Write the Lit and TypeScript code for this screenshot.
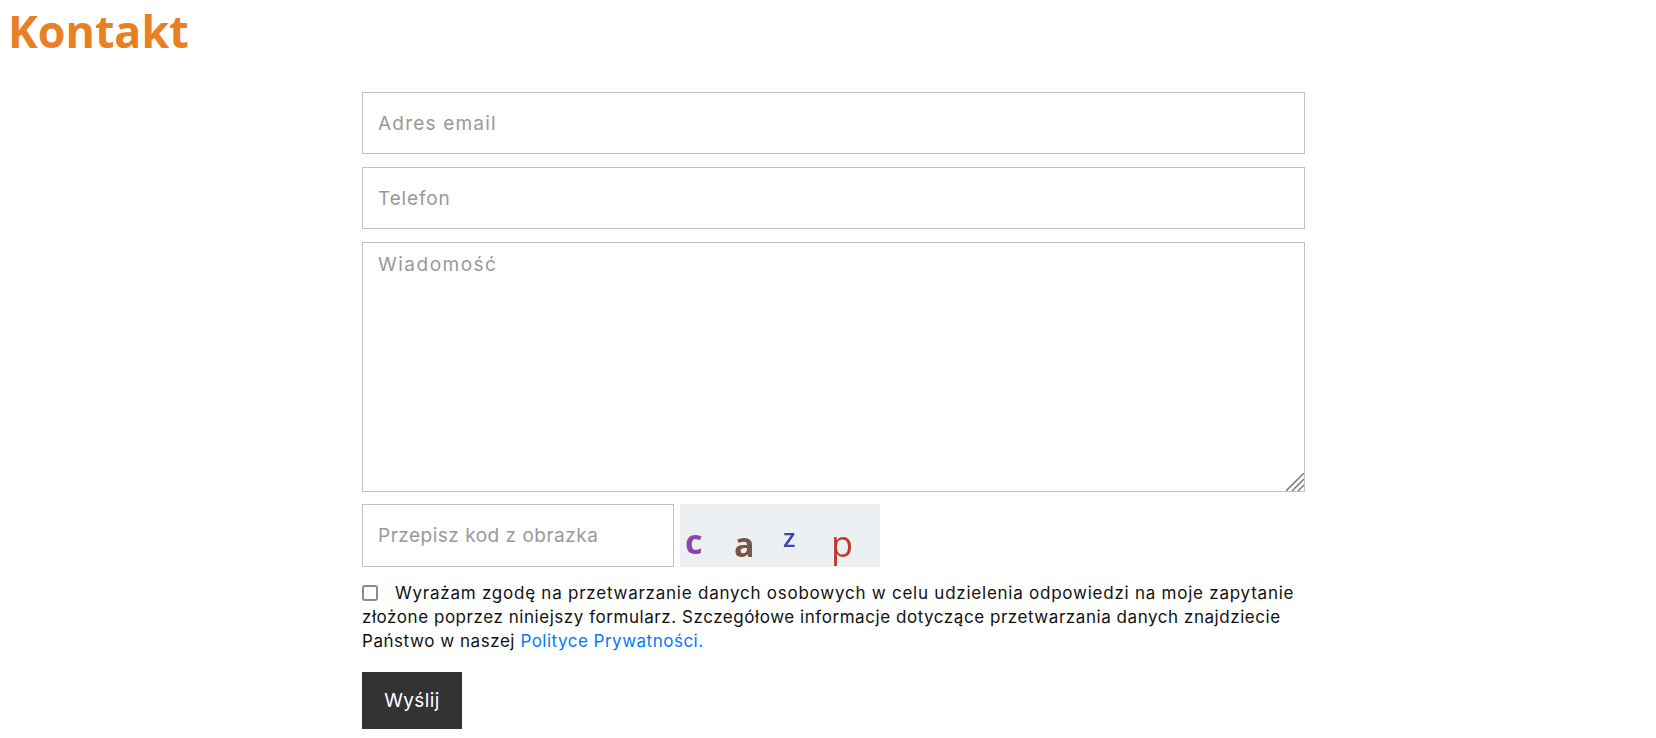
import { LitElement, html, css } from "lit";
import { customElement } from "lit/decorators.js";

@customElement("app-root")
export class AppRoot extends LitElement {
  static styles = css`
    :host { display: block; font-family: Inter, "Noto Sans", sans-serif; font-size: 17px; line-height: 24px; color: #212529; background: #fff; height: 738px; overflow: hidden; }
    * { box-sizing: border-box; }
    h1 { margin: 0; padding: 5px 0 0 8px; height: 92px; font: 700 44.8px/52px "Open Sans", sans-serif; color: #e98024; }
    form { width: 943px; margin-left: 362px; display: flex; flex-direction: column; gap: 13px; }
    input[type="text"], textarea { display: block; width: 100%; height: 62px; border: 1px solid #c2c2c2; border-radius: 0; padding: 0 15px; font: inherit; font-size: 19px; background: #fff; color: #212529; outline: none; margin: 0; }
    input::placeholder, textarea::placeholder { color: #999; opacity: 1; }
    .ls-email { letter-spacing: 1.2px; }
    .ls-phone { letter-spacing: 0.85px; }
    .ls-code { letter-spacing: 0.5px; }
    .area { position: relative; display: block; height: 250px; }
    textarea { height: 100%; padding-top: 10px; resize: none; letter-spacing: 1.5px; }
    .grip { position: absolute; right: 1px; bottom: 1px; width: 18px; height: 18px; pointer-events: none; }
    .captcha { display: flex; gap: 6px; height: 63px; margin-top: -1px; }
    .captcha input[type="text"] { width: 312px; height: 63px; }
    .img { width: 200px; height: 63px; background: #ecf0f3; display: block; filter: blur(0.4px); }
    .img text { font-family: "Open Sans", sans-serif; }
    .consent { margin: 1px 0 0; letter-spacing: 0.55px; color: #111; }
    .first { letter-spacing: 0.76px; }
    .consent input { appearance: none; width: 16px; height: 16px; margin: 0 17px 0 0; vertical-align: -2px; border: 2px solid #8a8a95; border-radius: 3px; background: #fff; }
    a { color: #007bff; text-decoration: none; letter-spacing: 0.5px; }
    button { align-self: flex-start; margin-top: 6px; width: 100px; height: 57px; border: 0; background: #333; color: #fff; font: inherit; font-size: 19px; letter-spacing: 0.4px; padding: 0; }
  `;
  render() {
    return html`
      <h1>Kontakt</h1>
      <form @submit=${(e: Event) => e.preventDefault()}>
        <input class="ls-email" type="text" placeholder="Adres email" />
        <input class="ls-phone" type="text" placeholder="Telefon" />
        <div class="area">
          <textarea placeholder="Wiadomość"></textarea>
          <svg class="grip" viewBox="0 0 18 18" aria-hidden="true">
            <path d="M0 18L18 0M6 18L18 6M12 18L18 12" stroke="#6f6f6f" stroke-width="1.4" fill="none" />
          </svg>
        </div>
        <div class="captcha">
          <input class="ls-code" type="text" placeholder="Przepisz kod z obrazka" />
          <svg class="img" viewBox="0 0 200 63" role="img" aria-label="captcha">
            <text x="5" y="50" font-size="34" font-weight="700" fill="#8e44ad">c</text>
            <text x="54" y="53" font-size="34" font-weight="700" fill="#795548">a</text>
            <text x="103" y="43" font-size="26" font-weight="600" fill="#3949ab">z</text>
            <text x="151" y="53" font-size="36" font-weight="400" fill="#c0392b">p</text>
          </svg>
        </div>
        <p class="consent"><input type="checkbox" /><span class="first">Wyrażam zgodę na przetwarzanie danych osobowych w celu udzielenia odpowiedzi na moje zapytanie</span> złożone poprzez niniejszy formularz. Szczegółowe informacje dotyczące przetwarzania danych znajdziecie Państwo w naszej <a href="#">Polityce Prywatności.</a></p>
        <button type="submit">Wyślij</button>
      </form>
    `;
  }
}
